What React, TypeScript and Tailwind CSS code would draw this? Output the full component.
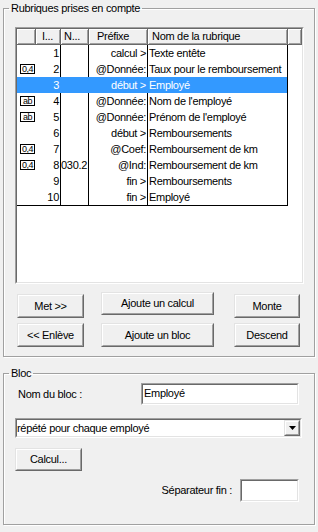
import React from "react";

type Row = { icon: string | null; i: string; n: string; p: string; nom: string; sel?: boolean };

const rows: Row[] = [
  { icon: null, i: "1", n: "", p: "calcul >", nom: "Texte entête" },
  { icon: "0,4", i: "2", n: "", p: "@Donnée:", nom: "Taux pour le remboursement" },
  { icon: null, i: "3", n: "", p: "début >", nom: "Employé", sel: true },
  { icon: "ab", i: "4", n: "", p: "@Donnée:", nom: "Nom de l'employé" },
  { icon: "ab", i: "5", n: "", p: "@Donnée:", nom: "Prénom de l'employé" },
  { icon: null, i: "6", n: "", p: "début >", nom: "Remboursements" },
  { icon: "0,4", i: "7", n: "", p: "@Coef:", nom: "Remboursement de km" },
  { icon: "0,4", i: "8", n: "030.2", p: "@Ind:", nom: "Remboursement de km" },
  { icon: null, i: "9", n: "", p: "fin >", nom: "Remboursements" },
  { icon: null, i: "10", n: "", p: "fin >", nom: "Employé" },
];

function Btn({ children, className }: { children: React.ReactNode; className: string }) {
  return (
    <div
      className={`border border-t-[#e3e3e3] border-l-[#e3e3e3] border-r-[#696969] border-b-[#696969] bg-[#f0f0f0] ${className}`}
    >
      <div className="h-full flex items-center justify-center border border-t-white border-l-white border-r-[#a0a0a0] border-b-[#a0a0a0]">
        {children}
      </div>
    </div>
  );
}

function Sunken({ children, className }: { children?: React.ReactNode; className: string }) {
  return (
    <div className={`border border-t-[#a0a0a0] border-l-[#a0a0a0] border-r-white border-b-white ${className}`}>
      <div className="h-full border border-t-[#696969] border-l-[#696969] border-r-[#e3e3e3] border-b-[#e3e3e3] bg-white">
        {children}
      </div>
    </div>
  );
}

function HeadCell({ children, className }: { children?: React.ReactNode; className: string }) {
  return (
    <div
      className={`h-full border-r border-b border-[#696969] shadow-[inset_1px_1px_0_#fff,inset_-1px_-1px_0_#a0a0a0] leading-[15px] whitespace-nowrap overflow-hidden ${className}`}
    >
      {children}
    </div>
  );
}

export default function App() {
  return (
    <div className="w-[318px] h-[532px] bg-[#f0f0f0] text-[11px] tracking-[-0.3px] text-black overflow-hidden font-['Liberation_Sans',Arial,sans-serif]">
      <fieldset className="mx-[3px] mt-[2px] border border-[#a0a0a0] shadow-[inset_1px_1px_0_#fff,1px_1px_0_#fff] pb-[9px]">
        <legend className="ml-[5px] px-[2px] leading-[13px]">Rubriques prises en compte</legend>
        <Sunken className="ml-[11px] mt-[12px] w-[289px] h-[257px]">
          <div className="flex h-[16px] bg-[#f0f0f0]">
            <HeadCell className="w-[19px]" />
            <HeadCell className="w-[25px] pl-[6px]">I...</HeadCell>
            <HeadCell className="w-[28px] pl-[3px]">N...</HeadCell>
            <HeadCell className="w-[59px] pl-[8px]">Préfixe</HeadCell>
            <HeadCell className="w-[140px] pl-[4px]">Nom de la rubrique</HeadCell>
            <HeadCell className="flex-1" />
          </div>
          <div className="w-[271px] border-b border-black">
            {rows.map((r, idx) => (
              <div
                key={idx}
                className={`flex h-[16px] leading-[16px] whitespace-nowrap ${r.sel ? "bg-[#3399ff] text-white" : ""}`}
              >
                <div className="w-[19px] pl-[3px] flex items-center">
                  {r.icon && (
                    <span className="w-[15px] h-[10px] border border-black flex items-center justify-center text-[9px] leading-none tracking-[-0.5px]">
                      {r.icon}
                    </span>
                  )}
                </div>
                <div
                  className={`w-[25px] text-right pr-[1px] border-r ${r.sel ? "border-[#3399ff]" : "border-black"}`}
                >
                  {r.i}
                </div>
                <div
                  className={`w-[28px] overflow-hidden border-r ${r.sel ? "border-[#3399ff]" : "border-black"}`}
                >
                  {r.n}
                </div>
                <div
                  className={`w-[59px] text-right pr-[1px] overflow-hidden border-r ${r.sel ? "border-[#3399ff]" : "border-black"}`}
                >
                  {r.p}
                </div>
                <div className="w-[140px] pl-[1px] overflow-hidden border-r border-black">{r.nom}</div>
              </div>
            ))}
          </div>
        </Sunken>
        <div className="flex items-start mt-[8px] ml-[13px]">
          <Btn className="w-[67px] h-[24px] mt-[2px]">Met &gt;&gt;</Btn>
          <Btn className="w-[113px] h-[23px] ml-[17px]">Ajoute un calcul</Btn>
          <Btn className="w-[66px] h-[24px] mt-[2px] ml-[20px]">Monte</Btn>
        </div>
        <div className="flex items-start mt-[5px] ml-[13px]">
          <Btn className="w-[67px] h-[24px]">&lt;&lt; Enlève</Btn>
          <Btn className="w-[113px] h-[24px] ml-[17px]">Ajoute un bloc</Btn>
          <Btn className="w-[66px] h-[24px] ml-[20px]">Descend</Btn>
        </div>
      </fieldset>

      <fieldset className="mx-[3px] mt-[10px] border border-[#a0a0a0] shadow-[inset_1px_1px_0_#fff,1px_1px_0_#fff] pb-[22px]">
        <legend className="ml-[5px] px-[2px] leading-[13px]">Bloc</legend>
        <div className="flex items-center mt-[3px]">
          <span className="ml-[14px]">Nom du bloc :</span>
          <Sunken className="ml-auto mr-[15px] w-[158px] h-[22px]">
            <div className="pl-[1px] pt-[1px] leading-[14px]">Employé</div>
          </Sunken>
        </div>
        <Sunken className="ml-[11px] mt-[13px] w-[287px] h-[20px]">
          <div className="flex h-full">
            <div className="flex-1 pl-[0px] leading-[16px]">répété pour chaque employé</div>
            <Btn className="w-[16px] h-full">
              <svg width="7" height="4" viewBox="0 0 7 4">
                <path d="M0 0H7L3.5 4Z" fill="#000" />
              </svg>
            </Btn>
          </div>
        </Sunken>
        <Btn className="ml-[11px] mt-[10px] w-[67px] h-[23px]">Calcul...</Btn>
        <div className="flex items-center justify-end mt-[8px] mr-[15px]">
          <span className="mr-[8px]">Séparateur fin :</span>
          <Sunken className="w-[59px] h-[23px]" />
        </div>
      </fieldset>
    </div>
  );
}
